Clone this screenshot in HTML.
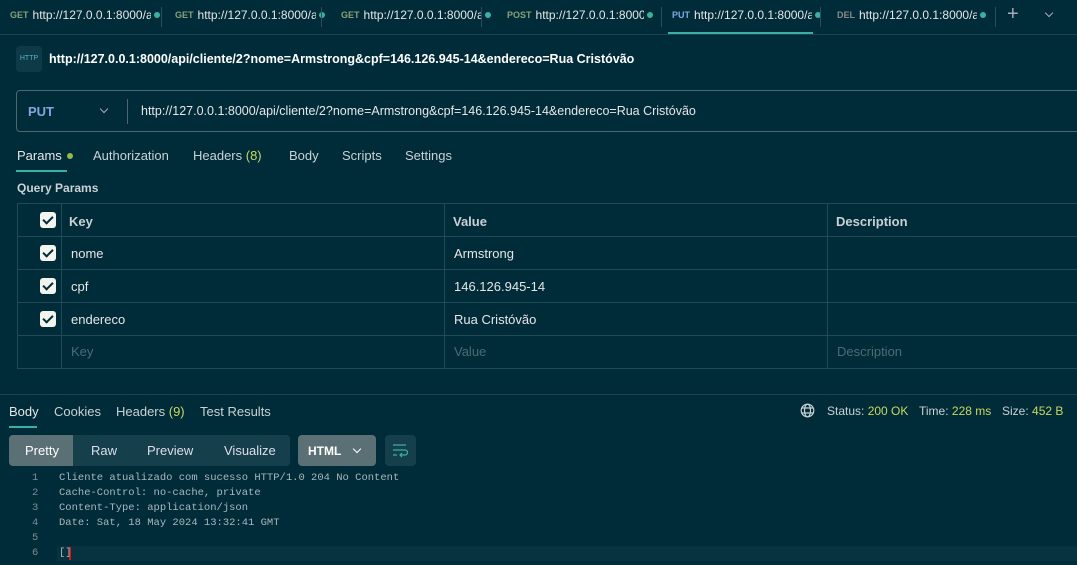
<!DOCTYPE html>
<html><head><meta charset="utf-8"><style>
*{margin:0;padding:0;box-sizing:border-box}
body{width:1077px;height:565px;background:#002b38;font-family:"Liberation Sans",sans-serif;color:#e6e6e6;position:relative;overflow:hidden;font-size:13px}
.a{position:absolute;white-space:nowrap}
.tab{position:absolute;top:0;height:34px;line-height:30px;font-size:12px;color:#e6e6e6;white-space:nowrap}
.tab b{font-size:9px;font-weight:bold;color:#8aa07a;margin-right:4px;vertical-align:top}
.tab i{font-style:normal;display:inline-block;width:118px;overflow:hidden;vertical-align:top}
.dot{display:inline-block;width:6px;height:6px;border-radius:3px;background:#3ab0a0;margin-left:3px;vertical-align:top;margin-top:12px}
.sep{position:absolute;top:7px;width:1px;height:20px;background:#2c4d58}
.cb{position:absolute;width:16px;height:16px;background:#f4f4ee;border-radius:3px}
.cb:after{content:"";position:absolute;left:5px;top:2px;width:4px;height:8px;border:solid #002b38;border-width:0 2px 2px 0;transform:rotate(45deg)}
.code{position:absolute;font-family:"Liberation Mono",monospace;font-size:10.5px;color:#a9b8bf}
.chev{position:absolute;width:6px;height:6px;border:solid #aab;border-width:0 1.3px 1.3px 0;transform:rotate(45deg)}
</style></head><body>
<div class="tab" style="left:10px"><b>GET</b><i>http://127.0.0.1:8000/api</i><span class="dot"></span></div>
<div class="sep" style="left:161px"></div>
<div class="tab" style="left:175px"><b>GET</b><i>http://127.0.0.1:8000/api</i><span class="dot"></span></div>
<div class="sep" style="left:321px"></div>
<div class="tab" style="left:341px"><b>GET</b><i>http://127.0.0.1:8000/api</i><span class="dot"></span></div>
<div class="sep" style="left:481px"></div>
<div class="tab" style="left:507px"><b>POST</b><i style="width:108px">http://127.0.0.1:8000/api</i><span class="dot"></span></div>
<div class="sep" style="left:661px"></div>
<div class="tab" style="left:672px"><b style="color:#7fa8e0">PUT</b><i>http://127.0.0.1:8000/api</i><span class="dot"></span></div>
<div class="a" style="left:668px;top:32px;width:145px;height:2px;background:#3ab0a0"></div>
<div class="sep" style="left:820px"></div>
<div class="tab" style="left:837px"><b style="color:#8a8a8a">DEL</b><i>http://127.0.0.1:8000/api</i><span class="dot"></span></div>
<div class="sep" style="left:995px"></div>
<div class="a" style="left:1007px;top:3px;font-size:20px;color:#aab">+</div>
<div class="chev" style="left:1046px;top:10px"></div>
<div class="a" style="left:0;top:34px;width:1077px;height:1px;background:#1d4450"></div>

<div class="a" style="left:16px;top:46px;width:26px;height:26px;background:#0e3a48;border-radius:4px;color:#4fb3c9;font-size:7px;text-align:center;line-height:26px">HTTP</div>
<div class="a" style="left:49px;top:52px;font-weight:bold;font-size:12.5px;color:#fff">http://127.0.0.1:8000/api/cliente/2?nome=Armstrong&amp;cpf=146.126.945-14&amp;endereco=Rua Cristóvão</div>

<div class="a" style="left:16px;top:90px;width:1080px;height:42px;border:1px solid #4c6770;border-radius:4px"></div>
<div class="a" style="left:28px;top:104px;font-weight:bold;color:#7fa8e0">PUT</div>
<div class="chev" style="left:101px;top:106px"></div>
<div class="a" style="left:127px;top:99px;width:1px;height:25px;background:#4c6770"></div>
<div class="a" style="left:141px;top:104px;font-size:12.5px">http://127.0.0.1:8000/api/cliente/2?nome=Armstrong&amp;cpf=146.126.945-14&amp;endereco=Rua Cristóvão</div>

<div class="a" style="left:17px;top:148px">Params <span class="dot" style="background:#9ab84a;margin-left:2px;margin-top:5px"></span></div>
<div class="a" style="left:16px;top:170px;width:51px;height:2px;background:#3ab0a0"></div>
<div class="a" style="left:93px;top:148px;color:#c9d1d4">Authorization</div>
<div class="a" style="left:193px;top:148px;color:#c9d1d4">Headers <span style="color:#c8d860">(8)</span></div>
<div class="a" style="left:289px;top:148px;color:#c9d1d4">Body</div>
<div class="a" style="left:342px;top:148px;color:#c9d1d4">Scripts</div>
<div class="a" style="left:405px;top:148px;color:#c9d1d4">Settings</div>
<div class="a" style="left:17px;top:181px;font-weight:bold;font-size:12px;color:#c9d1d4">Query Params</div>

<div class="a" style="left:17px;top:203px;width:1070px;height:166px;border:1px solid #1f4a57"></div>
<div class="a" style="left:17px;top:236px;width:1060px;height:1px;background:#1f4a57"></div>
<div class="a" style="left:17px;top:269px;width:1060px;height:1px;background:#1f4a57"></div>
<div class="a" style="left:17px;top:302px;width:1060px;height:1px;background:#1f4a57"></div>
<div class="a" style="left:17px;top:335px;width:1060px;height:1px;background:#1f4a57"></div>
<div class="a" style="left:61px;top:203px;width:1px;height:166px;background:#1f4a57"></div>
<div class="a" style="left:444px;top:203px;width:1px;height:166px;background:#1f4a57"></div>
<div class="a" style="left:827px;top:203px;width:1px;height:166px;background:#1f4a57"></div>
<div class="cb" style="left:40px;top:212px"></div>
<div class="cb" style="left:40px;top:245px"></div>
<div class="cb" style="left:40px;top:278px"></div>
<div class="cb" style="left:40px;top:311px"></div>
<div class="a" style="left:69px;top:214px;font-weight:bold;color:#c9d1d4">Key</div>
<div class="a" style="left:453px;top:214px;font-weight:bold;color:#c9d1d4">Value</div>
<div class="a" style="left:836px;top:214px;font-weight:bold;color:#c9d1d4">Description</div>
<div class="a" style="left:71px;top:246px">nome</div>
<div class="a" style="left:454px;top:246px">Armstrong</div>
<div class="a" style="left:71px;top:279px">cpf</div>
<div class="a" style="left:454px;top:279px">146.126.945-14</div>
<div class="a" style="left:71px;top:312px">endereco</div>
<div class="a" style="left:454px;top:312px">Rua Cristóvão</div>
<div class="a" style="left:71px;top:344px;color:#4d6b75">Key</div>
<div class="a" style="left:454px;top:344px;color:#4d6b75">Value</div>
<div class="a" style="left:837px;top:344px;color:#4d6b75">Description</div>

<div class="a" style="left:0;top:394px;width:1077px;height:1px;background:#1d4450"></div>
<div class="a" style="left:9px;top:404px">Body</div>
<div class="a" style="left:9px;top:426px;width:28px;height:2px;background:#3ab0a0"></div>
<div class="a" style="left:54px;top:404px;color:#c9d1d4">Cookies</div>
<div class="a" style="left:116px;top:404px;color:#c9d1d4">Headers <span style="color:#c8d860">(9)</span></div>
<div class="a" style="left:200px;top:404px;color:#c9d1d4">Test Results</div>
<svg class="a" style="left:800px;top:403px" width="15" height="15" viewBox="0 0 15 15" fill="none" stroke="#c9d1d4" stroke-width="1.2"><circle cx="7.5" cy="7.5" r="6.3"/><ellipse cx="7.5" cy="7.5" rx="3" ry="6.3"/><path d="M1.5 5h12M1.5 10h12"/></svg>
<div class="a" style="left:827px;top:404px;font-size:12px;color:#c9d1d4">Status: <span style="color:#c8d860">200 OK</span></div>
<div class="a" style="left:919px;top:404px;font-size:12px;color:#c9d1d4">Time: <span style="color:#c8d860">228 ms</span></div>
<div class="a" style="left:1002px;top:404px;font-size:12px;color:#c9d1d4">Size: <span style="color:#c8d860">452 B</span></div>

<div class="a" style="left:9px;top:435px;width:281px;height:31px;background:#163f4c;border-radius:4px"></div>
<div class="a" style="left:9px;top:435px;width:64px;height:31px;background:#5b7075;border-radius:4px 0 0 4px"></div>
<div class="a" style="left:25px;top:443px;color:#fff">Pretty</div>
<div class="a" style="left:91px;top:443px;color:#dde">Raw</div>
<div class="a" style="left:147px;top:443px;color:#dde">Preview</div>
<div class="a" style="left:224px;top:443px;color:#dde">Visualize</div>
<div class="a" style="left:298px;top:435px;width:78px;height:31px;background:#5b7075;border-radius:4px"></div>
<div class="a" style="left:308px;top:444px;font-weight:bold;font-size:12px;color:#fff">HTML</div>
<div class="chev" style="left:354px;top:446px;border-color:#fff"></div>
<div class="a" style="left:385px;top:435px;width:31px;height:31px;background:#163f4c;border-radius:4px"></div>
<svg class="a" style="left:391px;top:442px" width="18" height="16" viewBox="0 0 18 16" fill="none" stroke="#3ab0a0" stroke-width="1.2"><path d="M2 3h13M2 8h12a2.5 2.5 0 0 1 0 5h-5M11 11l-2 2 2 2M2 13h4"/></svg>

<div class="a" style="left:57px;top:546px;width:1020px;height:15px;background:#07323f"></div>
<div class="a" style="left:69px;top:547px;width:2px;height:13px;background:#e01010"></div>
<div class="code" style="left:32px;top:471px;line-height:15px;color:#7d8e95">1<br>2<br>3<br>4<br>5<br>6</div>
<div class="code" style="left:59px;top:471px;line-height:15px">Cliente atualizado com sucesso HTTP/1.0 204 No Content<br>Cache-Control: no-cache, private<br>Content-Type: application/json<br>Date: Sat, 18 May 2024 13:32:41 GMT<br>&nbsp;<br>[]</div>
</body></html>
